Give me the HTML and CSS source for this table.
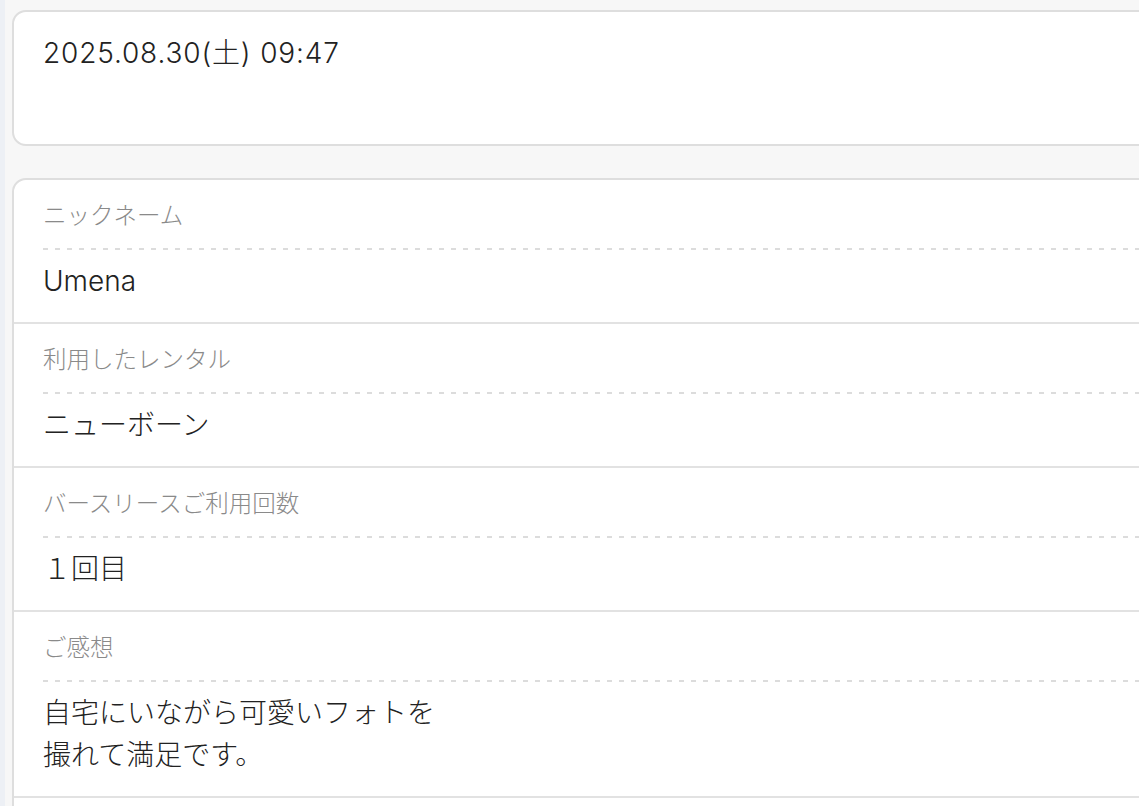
FILE: index.html
```html
<!DOCTYPE html>
<html lang="ja">
<head>
<meta charset="utf-8">
<title>レビュー</title>
<link rel="stylesheet" href="styles.css">
</head>
<body>
<div class="page">
  <div class="strip"></div>
  <main class="content">
    <section class="card date-card">
      <p class="date">2025.08.30(土) 09:47</p>
    </section>
    <section class="card detail-card">
      <div class="row">
        <div class="label">ニックネーム</div>
        <div class="value">Umena</div>
      </div>
      <div class="row">
        <div class="label">利用したレンタル</div>
        <div class="value">ニューボーン</div>
      </div>
      <div class="row">
        <div class="label">バースリースご利用回数</div>
        <div class="value">１回目</div>
      </div>
      <div class="row">
        <div class="label">ご感想</div>
        <div class="value">自宅にいながら可愛いフォトを<br>撮れて満足です。</div>
      </div>
      <div class="row">
        <div class="label">&nbsp;</div>
        <div class="value">&nbsp;</div>
      </div>
    </section>
  </main>
</div>
</body>
</html>
```

FILE: styles.css
```css
html, body {
  margin: 0;
  padding: 0;
  height: 100%;
  overflow: hidden;
  background: #f7f7f7;
}
body {
  font-family: Inter, "Noto Sans CJK JP", "Noto Sans", sans-serif;
  font-weight: 300;
  color: #222;
}
.page {
  display: flex;
  min-height: 100%;
}
.strip {
  flex: 0 0 5px;
  background: #edf0f5;
}
.content {
  flex: 0 0 1200px;
  padding: 10px 0 0 7px;
  display: flex;
  flex-direction: column;
  gap: 32px;
}
.card {
  background: #fff;
  border: 2px solid #dedede;
  border-radius: 14px;
}
.date-card {
  height: 136px;
  box-sizing: border-box;
  padding: 21px 29px 20px;
}
.date {
  margin: 0;
  font-size: 28px;
  line-height: 40px;
  letter-spacing: 0.85px;
  color: #222;
}
.row {
  padding: 19px 29px 20px;
  border-bottom: 2px solid #e2e2e2;
}
.label {
  font-size: 23.5px;
  line-height: 34px;
  color: #8a8a8a;
  padding-bottom: 17px;
  background: repeating-linear-gradient(90deg, #dcdcdc 0 5px, transparent 5px 12px) left bottom / 100% 2px no-repeat;
}
.value {
  padding-top: 10px;
  font-size: 28px;
  line-height: 42px;
  color: #222;
}
```
